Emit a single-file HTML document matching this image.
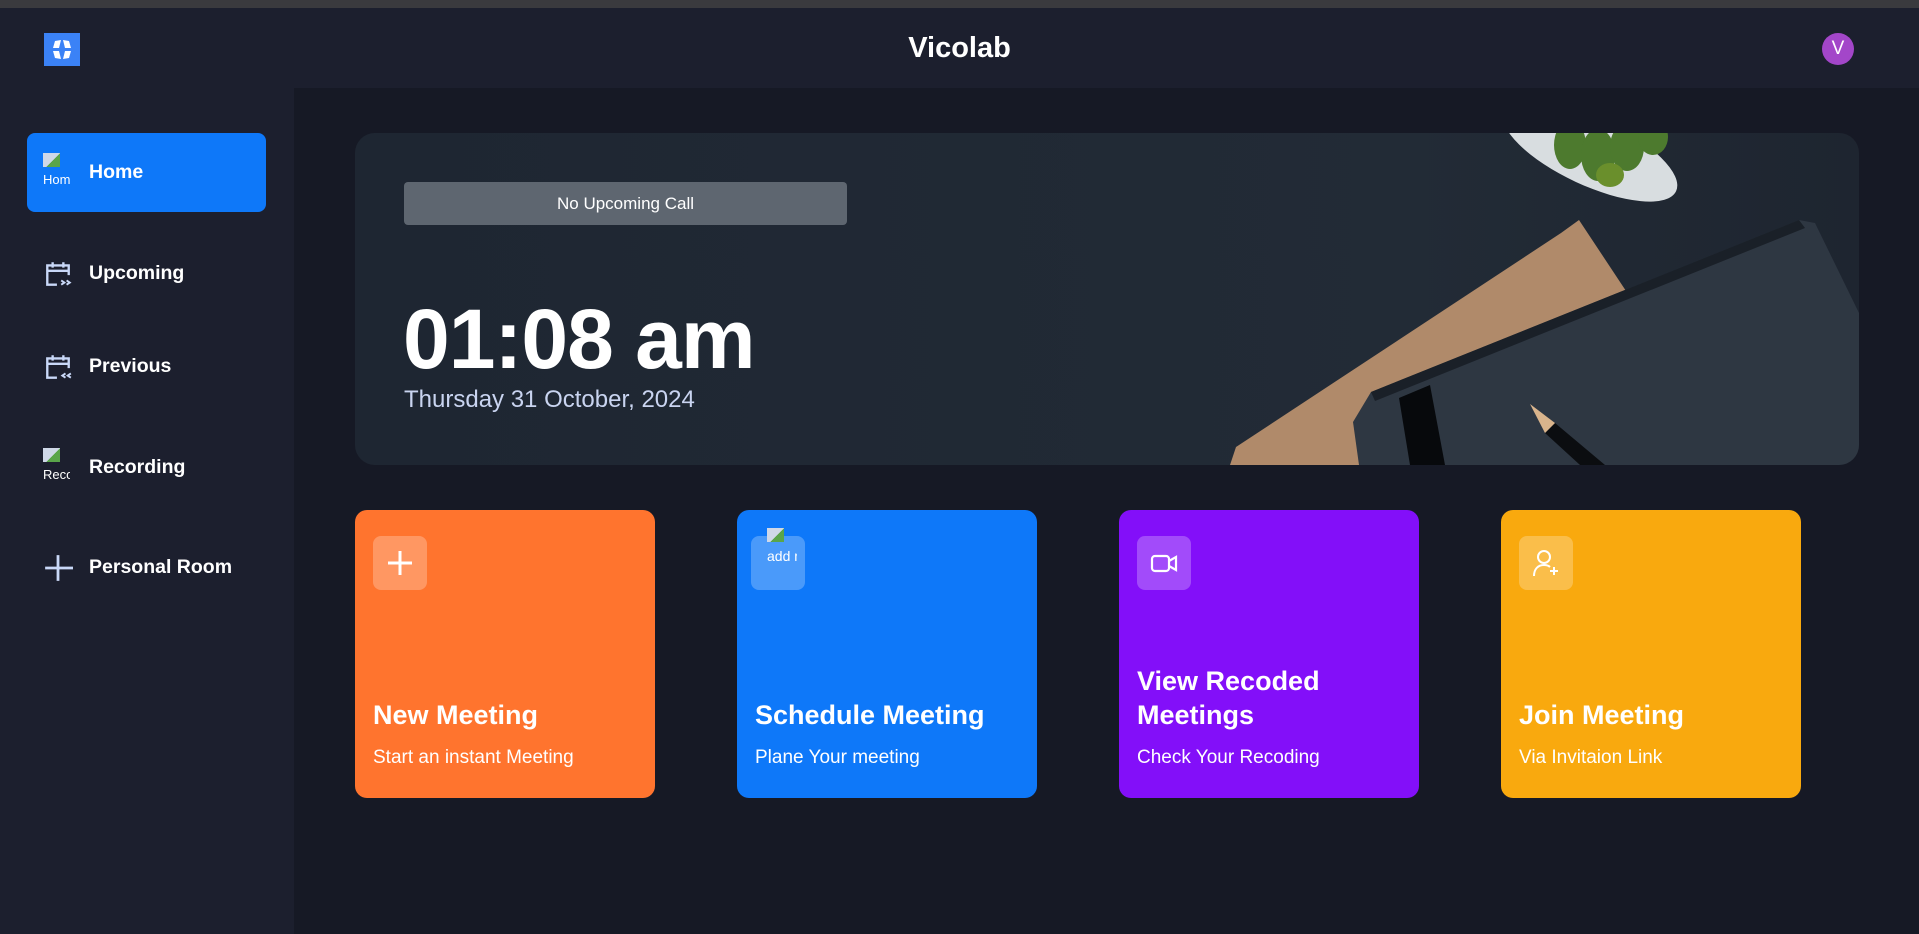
<!DOCTYPE html>
<html><head><meta charset="utf-8"><style>
*{margin:0;padding:0;box-sizing:border-box}
body{width:1919px;height:934px;background:#161925;font-family:"Liberation Sans",sans-serif;color:#fff;overflow:hidden;position:relative}
.strip{position:absolute;top:0;left:0;width:1919px;height:8px;background:#3a3a3e}
.nav{position:absolute;top:8px;left:0;width:1919px;height:80px;background:#1c1f2e}
.side{position:absolute;top:88px;left:0;width:294px;height:846px;background:#1c1f2e}
.logo{position:absolute;left:44px;top:33px;width:36px;height:33px;background:#3b82f6}
.title{position:absolute;top:32px;left:0;width:1919px;text-align:center;font-size:29px;font-weight:bold}
.av{position:absolute;left:1822px;top:33px;width:32px;height:32px;border-radius:50%;background:#a346c9;font-size:19px;text-align:center;line-height:32px}
.item{position:absolute;left:27px;width:239px;height:79px;border-radius:8px;font-size:19.5px;font-weight:bold;display:flex;align-items:center;padding-left:62px}
.item svg,.item .ph{position:absolute;left:16px}
.ph{font-size:13px;font-weight:normal;color:#fff;width:27px;overflow:hidden;white-space:nowrap;top:20px;line-height:15px}
.ph:before{content:"";display:block;width:17px;height:14px;background:linear-gradient(135deg,#cfd8e8 55%,#5aa54a 55%);margin-bottom:5px}
.hero{position:absolute;left:355px;top:133px;width:1504px;height:332px;border-radius:20px;overflow:hidden;background:linear-gradient(90deg,#1e2632,#222b36 70%,#1e2530)}
.nup{position:absolute;left:49px;top:49px;width:443px;height:43px;background:#5e6670;border-radius:4px;text-align:center;line-height:43px;font-size:17px}
.time{position:absolute;left:48px;top:158px;font-size:84px;font-weight:bold;letter-spacing:-1px}
.date{position:absolute;left:49px;top:253px;font-size:24px;color:#c9d4f0}
.card{position:absolute;top:510px;width:300px;height:288px;border-radius:12px}
.ic{position:absolute;left:18px;top:26px;width:54px;height:54px;border-radius:8px;background:rgba(255,255,255,.25);display:flex;align-items:center;justify-content:center}
.ct{position:absolute;left:18px;bottom:66px;font-size:27px;font-weight:bold;line-height:34px}
.cs{position:absolute;left:18px;top:237px;font-size:19px}
</style></head><body>
<div class="strip"></div>
<div class="nav"></div>
<div class="side"></div>
<div class="logo"><svg width="36" height="33" viewBox="0 0 36 33"><g fill="#fff"><path d="M17 7 L11 8 L9 15 L15 15 Z"/><path d="M19 7 L25 8 L27 15 L21 15 Z"/><path d="M17 26 L11 25 L9 18 L15 18 Z"/><path d="M19 26 L25 25 L27 18 L21 18 Z"/></g></svg></div>
<div class="title">Vicolab</div>
<div class="av">V</div>

<div class="item" style="top:133px;background:#0e78f9"><span class="ph">Home</span>Home</div>
<div class="item" style="top:234px"><svg width="30" height="30" viewBox="0 0 28 28" fill="none" stroke="#c9d8f8" stroke-width="2.2"><path d="M13 24H4V6h20v9M4 11h20M9 3v5M19 3v5"/><path d="M17 20l3 2-3 2M22 20l3 2-3 2" stroke-width="1.8"/></svg>Upcoming</div>
<div class="item" style="top:327px"><svg width="30" height="30" viewBox="0 0 28 28" fill="none" stroke="#c9d8f8" stroke-width="2.2"><path d="M13 24H4V6h20v9M4 11h20M9 3v5M19 3v5"/><path d="M21 20l-3 2 3 2M26 20l-3 2 3 2" stroke-width="1.8"/></svg>Previous</div>
<div class="item" style="top:428px"><span class="ph">Recording</span>Recording</div>
<div class="item" style="top:528px"><svg width="30" height="30" viewBox="0 0 28 28" stroke="#c9d8f8" stroke-width="2.6"><path d="M14 2v24M2 14h26"/></svg>Personal Room</div>

<div class="hero">
<svg width="1504" height="332" style="position:absolute;left:0;top:0">
<ellipse cx="1235" cy="18" rx="95" ry="34" fill="#d8dde0" transform="rotate(25 1235 18)"/>
<g fill="#4d7a2e"><ellipse cx="1215" cy="12" rx="16" ry="24"/><ellipse cx="1243" cy="22" rx="17" ry="26"/><ellipse cx="1272" cy="14" rx="17" ry="24"/><ellipse cx="1298" cy="4" rx="15" ry="18"/><ellipse cx="1255" cy="42" rx="14" ry="12" fill="#6a8f2c"/></g>
<polygon points="1206,100 1224,87 1273,161 1100,332 875,332 881,314" fill="#b08a6a"/>
<polygon points="1016,259 1444,87 1460,90 1504,180 1504,332 1004,332 998,289" fill="#2e3742"/>
<polygon points="1016,259 1444,87 1450,95 1020,268" fill="#1a2028"/>
<polygon points="1044,265 1075,252 1090,332 1055,332" fill="#07090c"/>
<polygon points="1190,300 1200,290 1250,332 1225,332" fill="#0b0d10"/>
<polygon points="1175,271 1200,290 1190,300" fill="#d9b48c"/>
</svg>
<div class="nup">No Upcoming Call</div>
<div class="time">01:08 am</div>
<div class="date">Thursday 31 October, 2024</div>
</div>

<div class="card" style="left:355px;background:#ff742e"><div class="ic"><svg width="30" height="30" stroke="#fff" stroke-width="3"><path d="M15 3v24M3 15h24"/></svg></div><div class="ct">New Meeting</div><div class="cs">Start an instant Meeting</div></div>
<div class="card" style="left:737px;background:#0e78f9"><div class="ic" style="left:14px;top:26px"></div><div class="ph" style="position:absolute;left:30px;top:18px;font-size:14px;width:30px;line-height:18px">add mee</div><div class="ct">Schedule Meeting</div><div class="cs">Plane Your meeting</div></div>
<div class="card" style="left:1119px;background:#830ff9"><div class="ic"><svg width="30" height="30" fill="none" stroke="#fff" stroke-width="2.2"><rect x="3" y="8" width="17" height="15" rx="3"/><path d="M20 13l7-4v13l-7-4"/></svg></div><div class="ct" style="bottom:66px">View Recoded<br>Meetings</div><div class="cs">Check Your Recoding</div></div>
<div class="card" style="left:1501px;background:#f9a90e"><div class="ic"><svg width="30" height="30" fill="none" stroke="#fff" stroke-width="2"><circle cx="13" cy="9" r="6"/><path d="M3 28c0-7 4-11 10-11 3 0 5 1 6 2M23 19v8M19 23h8"/></svg></div><div class="ct">Join Meeting</div><div class="cs">Via Invitaion Link</div></div>
</body></html>
